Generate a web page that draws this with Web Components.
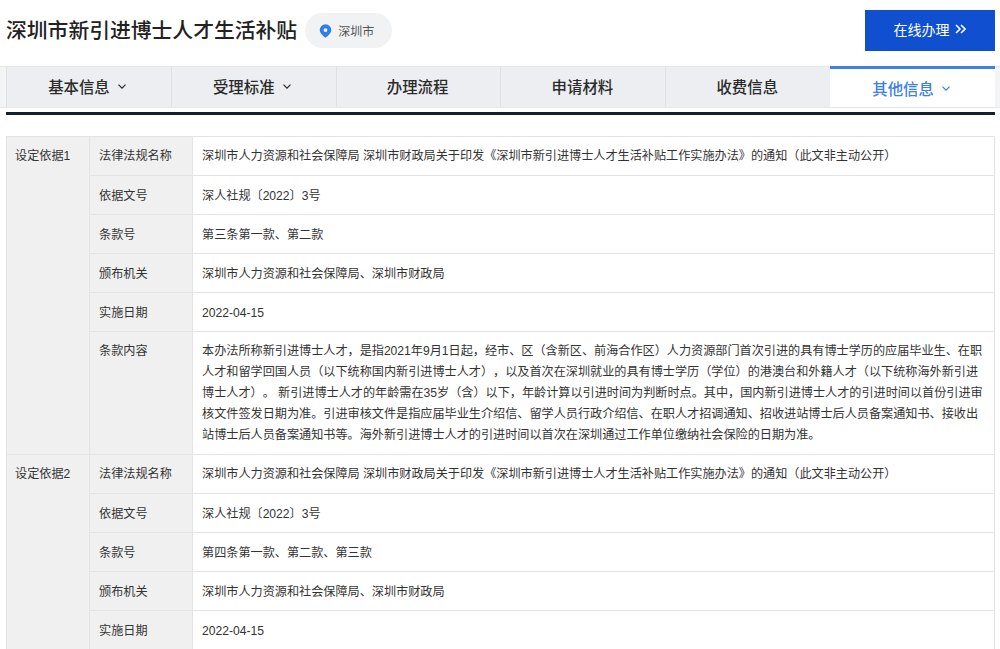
<!DOCTYPE html>
<html lang="zh-CN">
<head>
<meta charset="utf-8">
<title>深圳市新引进博士人才生活补贴</title>
<style>
  html, body { margin: 0; height: 649px; overflow: hidden; background: #fff; }
  body { font-family: "Liberation Sans", "Noto Sans CJK SC", sans-serif; color: #333; text-spacing-trim: space-all; }
</style>
</head>
<body>
<guide-page>
  <guide-header slot="header" title-text="深圳市新引进博士人才生活补贴" city="深圳市" action="在线办理"></guide-header>
  <tab-bar slot="tabs">
    <tab-item arrow>基本信息</tab-item>
    <tab-item arrow>受理标准</tab-item>
    <tab-item>办理流程</tab-item>
    <tab-item>申请材料</tab-item>
    <tab-item>收费信息</tab-item>
    <tab-item arrow active>其他信息</tab-item>
  </tab-bar>
  <basis-group label="设定依据1">
    <basis-row name="法律法规名称">深圳市人力资源和社会保障局 深圳市财政局关于印发《深圳市新引进博士人才生活补贴工作实施办法》的通知（此文非主动公开）</basis-row>
    <basis-row name="依据文号">深人社规〔2022〕3号</basis-row>
    <basis-row name="条款号">第三条第一款、第二款</basis-row>
    <basis-row name="颁布机关">深圳市人力资源和社会保障局、深圳市财政局</basis-row>
    <basis-row name="实施日期">2022-04-15</basis-row>
    <basis-row name="条款内容" long>本办法所称新引进博士人才，是指2021年9月1日起，经市、区（含新区、前海合作区）人力资源部门首次引进的具有博士学历的应届毕业生、在职人才和留学回国人员（以下统称国内新引进博士人才），以及首次在深圳就业的具有博士学历（学位）的港澳台和外籍人才（以下统称海外新引进博士人才）。 新引进博士人才的年龄需在35岁（含）以下，年龄计算以引进时间为判断时点。其中，国内新引进博士人才的引进时间以首份引进审核文件签发日期为准。引进审核文件是指应届毕业生介绍信、留学人员行政介绍信、在职人才招调通知、招收进站博士后人员备案通知书、接收出站博士后人员备案通知书等。海外新引进博士人才的引进时间以首次在深圳通过工作单位缴纳社会保险的日期为准。</basis-row>
  </basis-group>
  <basis-group label="设定依据2">
    <basis-row name="法律法规名称">深圳市人力资源和社会保障局 深圳市财政局关于印发《深圳市新引进博士人才生活补贴工作实施办法》的通知（此文非主动公开）</basis-row>
    <basis-row name="依据文号">深人社规〔2022〕3号</basis-row>
    <basis-row name="条款号">第四条第一款、第二款、第三款</basis-row>
    <basis-row name="颁布机关">深圳市人力资源和社会保障局、深圳市财政局</basis-row>
    <basis-row name="实施日期">2022-04-15</basis-row>
  </basis-group>
</guide-page>

<script>
class GuidePage extends HTMLElement {
  constructor() {
    super();
    this.attachShadow({ mode: 'open' });
    this.shadowRoot.innerHTML = `
      <style>
        :host { display: block; }
        .rule { height: 3px; margin: 4px 5px 21px 6px; background: #14202e; }
        .table { margin: 0 5px 0 6px; border-top: 1px solid #e4e4e4; }
      </style>
      <slot name="header"></slot>
      <slot name="tabs"></slot>
      <div class="rule"></div>
      <div class="table"><slot></slot></div>
    `;
  }
}

class GuideHeader extends HTMLElement {
  constructor() {
    super();
    this.attachShadow({ mode: 'open' });
    this.shadowRoot.innerHTML = `
      <style>
        :host { display: flex; align-items: center; height: 41px; padding: 10px 5px 15px 6px; }
        h1 { margin: 0; font-size: 20.8px; font-weight: 500; line-height: 41px; color: #222; white-space: nowrap; }
        .city { display: flex; align-items: center; gap: 6px; box-sizing: border-box; width: 87px; height: 35px; margin: 0 0 0 8px; padding-left: 14px; border-radius: 18px; background: #f1f2f4; font-size: 12px; color: #555; }
        .go { display: flex; align-items: center; justify-content: center; gap: 5px; box-sizing: border-box; width: 130px; height: 41px; margin-left: auto; padding: 0 1px 3px 0; background: #1050d0; color: #fff; font-size: 14px; }
        svg { display: block; }
      </style>
      <h1></h1>
      <div class="city">
        <svg width="13" height="14" viewBox="0 0 13 14"><path fill="#2f7fe8" fill-rule="evenodd" d="M6.5 0.3a5.8 5.8 0 0 1 5.8 5.8c0 3-3.2 6-5.8 7.7C3.9 12.1.7 9.1.7 6.1A5.8 5.8 0 0 1 6.5.3zm0 3.9a1.9 1.9 0 1 0 0 3.8 1.9 1.9 0 0 0 0-3.8z"/></svg>
        <span class="city-name"></span>
      </div>
      <div class="go">
        <span class="go-text"></span>
        <svg width="11" height="10" viewBox="0 0 11 10"><path fill="none" stroke="#fff" stroke-width="1.6" d="M1 1l4 4-4 4M6 1l4 4-4 4"/></svg>
      </div>
    `;
    this.shadowRoot.querySelector('h1').textContent = this.getAttribute('title-text');
    this.shadowRoot.querySelector('.city-name').textContent = this.getAttribute('city');
    this.shadowRoot.querySelector('.go-text').textContent = this.getAttribute('action');
  }
}

class TabBar extends HTMLElement {
  constructor() {
    super();
    this.attachShadow({ mode: 'open' });
    this.shadowRoot.innerHTML = `
      <style>
        :host { display: grid; grid-template-columns: repeat(6, 1fr); box-sizing: border-box; height: 42px; padding: 0 5px 0 6px; background: #f3f4f5; border-top: 1px solid #e6e7e9; border-bottom: 1px solid #e6e7e9; }
      </style>
      <slot></slot>
    `;
  }
}

class TabItem extends HTMLElement {
  constructor() {
    super();
    this.attachShadow({ mode: 'open' });
    this.shadowRoot.innerHTML = `
      <style>
        :host { display: flex; align-items: center; justify-content: center; gap: 8px; box-sizing: border-box; min-width: 0; padding: 0 2px 2px 0; background: #eceef1; border-left: 1px solid #dfe1e4; font-size: 15.4px; font-weight: 500; color: #2a2a2a; }
        :host([arrow]) { padding-right: 4px; }
        :host([active]) { position: relative; top: -1px; height: 41px; margin-bottom: -1px; padding: 0 3px 0 0; background: #fff; border-left: 0; border-top: 3px solid #3a80e8; color: #3a80e8; }
        svg { display: none; }
        :host([arrow]) svg { display: block; }
      </style>
      <slot></slot>
      <svg width="8" height="5" viewBox="0 0 8 5"><path fill="none" stroke="currentColor" stroke-width="1.2" d="M.5.7L4 4.2 7.5.7"/></svg>
    `;
  }
}

class BasisGroup extends HTMLElement {
  constructor() {
    super();
    this.attachShadow({ mode: 'open' });
    this.shadowRoot.innerHTML = `
      <style>
        :host { display: grid; grid-template-columns: 82px 1fr; border-left: 1px solid #e4e4e4; border-right: 1px solid #e4e4e4; }
        .label { box-sizing: border-box; padding: 11px 0 0 8px; background: #f0f0f0; font-size: 12.14px; line-height: 17px; color: #333; border-bottom: 1px solid #e4e4e4; }
        .rows { min-width: 0; }
      </style>
      <div class="label"></div>
      <div class="rows"><slot></slot></div>
    `;
    this.shadowRoot.querySelector('.label').textContent = this.getAttribute('label');
  }
}

class BasisRow extends HTMLElement {
  constructor() {
    super();
    this.attachShadow({ mode: 'open' });
    this.shadowRoot.innerHTML = `
      <style>
        :host { display: grid; grid-template-columns: 104px 1fr; font-size: 12.14px; line-height: 17px; color: #333; border-bottom: 1px solid #e4e4e4; }
        :host(:not(:first-child)) .name, :host(:not(:first-child)) .value { padding-top: 12px; padding-bottom: 9px; }
        .name { padding: 11px 0 10px 9px; background: #f0f0f0; border-left: 1px solid #e4e4e4; border-right: 1px solid #e4e4e4; }
        .value { padding: 11px 9px 10px 9px; min-width: 0; }
        :host([long]) .name { padding-top: 11px; padding-bottom: 0; }
        :host([long]) .value { padding: 9px 9px 8px 9px; line-height: 21px; }
      </style>
      <div class="name"></div>
      <div class="value"><slot></slot></div>
    `;
    this.shadowRoot.querySelector('.name').textContent = this.getAttribute('name');
  }
}

customElements.define('guide-page', GuidePage);
customElements.define('guide-header', GuideHeader);
customElements.define('tab-bar', TabBar);
customElements.define('tab-item', TabItem);
customElements.define('basis-group', BasisGroup);
customElements.define('basis-row', BasisRow);
</script>
</body>
</html>
